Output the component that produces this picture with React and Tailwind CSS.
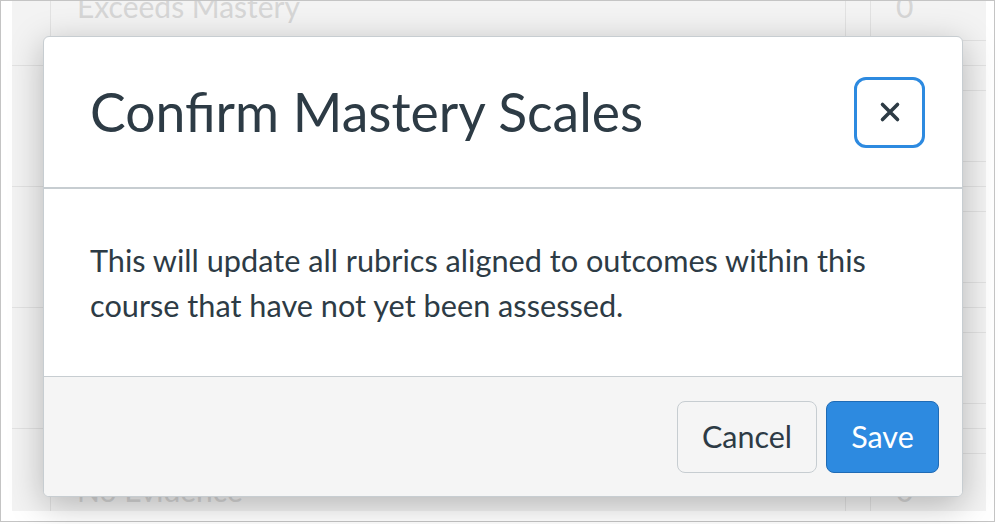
import React from "react";

const font = { fontFamily: "Lato, 'Noto Sans', sans-serif" };

function BgRow({ left, right }) {
  return (
    <div className="h-[121px] flex border-b border-[#e2e2e2] shrink-0">
      <div className="w-[38px]" />
      <div className="flex-1 border-l border-[#e2e2e2] pl-[26px] pt-[46px] text-[30px] leading-none text-[#d6d6d6]">
        {left}
      </div>
      <div className="w-[25px] border-l border-[#e2e2e2]" />
      <div className="w-[116px] border-l border-[#e2e2e2] flex flex-col">
        <div className="h-[25px] border-b border-[#e2e2e2]" />
        <div className="flex-1 border-b border-[#e2e2e2] pl-[25px] pt-[21px] text-[30px] leading-none text-[#d6d6d6]">
          {right}
        </div>
        <div className="h-[24px]" />
      </div>
    </div>
  );
}

export default function App() {
  return (
    <div className="w-[998px] h-[524px] bg-white" style={font}>
      <div className="relative w-[995px] h-[522px] border border-[#c4c4c4] bg-white">
        {/* background page */}
        <div className="ml-[11px] w-[974px] h-[510px] bg-[#f3f3f3] overflow-hidden flex flex-col">
          <div className="-mt-[56px] flex flex-col">
            <BgRow left="Exceeds Mastery" right="0" />
            <BgRow left="Mastery" right="0" />
            <BgRow left="Near Mastery" right="0" />
            <BgRow left="Well Below Mastery" right="0" />
            <BgRow left="No Evidence" right="0" />
          </div>
        </div>

        {/* modal */}
        <div className="absolute left-[42px] top-[35px] w-[920px] h-[461px] bg-white border border-[#c7cdd1] rounded-[6px] shadow-[0_8px_34px_rgba(0,0,0,0.26)] flex flex-col overflow-hidden text-[#2d3b45]">
          <div className="h-[152px] shrink-0 flex items-center justify-between pl-[46px] pr-[37px] border-b-2 border-[#c7cdd1]">
            <h1 className="text-[53.5px] leading-none font-normal">Confirm Mastery Scales</h1>
            <button className="w-[71px] h-[71px] rounded-[12px] border-[3px] border-[#2d8ae0] bg-white flex items-center justify-center">
              <svg width="22" height="22" viewBox="0 0 22 22">
                <path d="M3.5 3.5 L18.5 18.5 M18.5 3.5 L3.5 18.5" stroke="#2d3b45" strokeWidth="3.6" strokeLinecap="round" />
              </svg>
            </button>
          </div>
          <div className="h-[188px] shrink-0 flex items-center px-[46px] border-b border-[#c7cdd1]">
            <p className="text-[30.7px] leading-[45px]">
              This will update all rubrics aligned to outcomes within this
              <br />
              course that have not yet been assessed.
            </p>
          </div>
          <div className="flex-1 bg-[#f5f5f5] flex items-center justify-end gap-[9px] pr-[23px]">
            <button className="w-[140px] h-[72px] rounded-[8px] border border-[#c7cdd1] bg-[#f5f5f5] text-[30.5px] text-[#2d3b45]">
              Cancel
            </button>
            <button className="w-[113px] h-[72px] rounded-[8px] border border-[#1f6bb5] bg-[#2d8ae0] text-[30.5px] text-white">
              Save
            </button>
          </div>
        </div>
      </div>
    </div>
  );
}
